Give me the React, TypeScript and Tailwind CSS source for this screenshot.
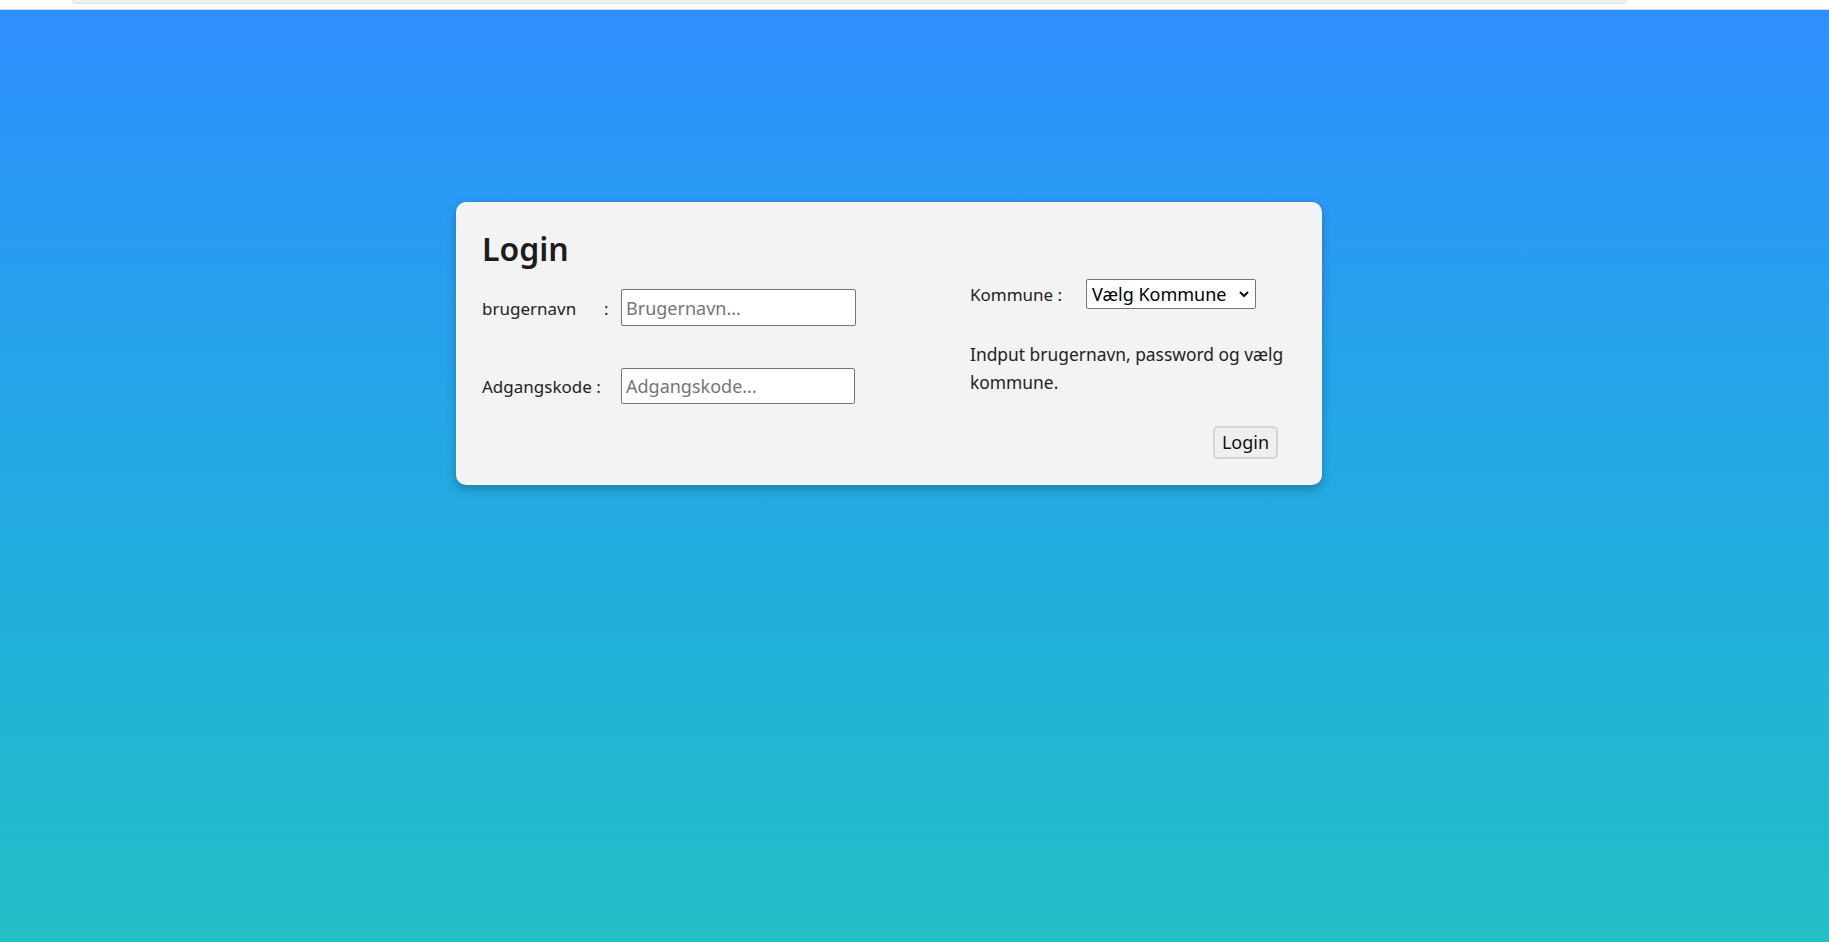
import React from "react";

export default function App() {
  return (
    <div
      className="min-h-screen flex flex-col"
      style={{ fontFamily: '"Noto Sans", "Open Sans", sans-serif' }}
    >
      <div className="h-[10px] bg-white relative border-b border-[#d8d8d8]">
        <div className="absolute left-[72px] top-0 w-[1555px] h-[4px] bg-[#eef0f0] border-b border-x border-[#e2e4e4] rounded-b-[6px]" />
      </div>
      <div className="flex-1 bg-gradient-to-b from-[#2f8ffe] to-[#22bfc6] pt-[192px]">
        <div className="ml-[456px] w-[866px] h-[283px] rounded-[10px] bg-[#f3f3f3] shadow-[0_4px_10px_rgba(0,0,0,0.25)] flex px-[26px] text-[#222222] text-[17px]">
          <div className="w-[494px] pt-[27px]">
            <h1 className="text-[32px] leading-[40px] font-semibold text-[#1c1c1c]">Login</h1>
            <div className="mt-[20px] flex items-baseline">
              <div className="w-[139px] flex">
                <span className="w-[122px]">brugernavn</span>
                <span>:</span>
              </div>
              <input
                className="w-[235px] h-[37px] bg-white border border-[#767676] rounded-[2px] px-[4px] text-[18px] text-black placeholder:text-[#757575] outline-none"
                placeholder="Brugernavn..."
              />
            </div>
            <div className="mt-[42px] flex items-baseline">
              <div className="w-[139px]">Adgangskode :</div>
              <input
                type="password"
                className="w-[234px] h-[36px] bg-white border border-[#767676] rounded-[2px] px-[4px] text-[18px] text-black placeholder:text-[#757575] outline-none"
                placeholder="Adgangskode..."
              />
            </div>
          </div>
          <div className="w-[330px] pt-[77px]">
            <div className="flex items-baseline">
              <span className="w-[116px]">Kommune :</span>
              <div className="relative">
                <select className="appearance-none w-[170px] h-[30px] bg-white border border-[#767676] rounded-[2px] pl-[5px] pr-[20px] text-[18px] text-black outline-none">
                  <option>Vælg Kommune</option>
                </select>
                <svg
                  className="absolute right-[7px] top-[12px] pointer-events-none"
                  width="10"
                  height="7"
                  viewBox="0 0 10 7"
                >
                  <polyline points="1,1 5,5 9,1" fill="none" stroke="#111" strokeWidth="2" />
                </svg>
              </div>
            </div>
            <p className="mt-[31px] leading-[28px] text-[17.4px]">Indput brugernavn, password og vælg kommune.</p>
            <div className="flex justify-end pr-[18px] mt-[30px]">
              <button className="w-[65px] h-[33px] bg-[#efefef] border-2 border-[#d4d4d4] rounded-[5px] text-[18px] text-[#111]">
                Login
              </button>
            </div>
          </div>
        </div>
      </div>
    </div>
  );
}
